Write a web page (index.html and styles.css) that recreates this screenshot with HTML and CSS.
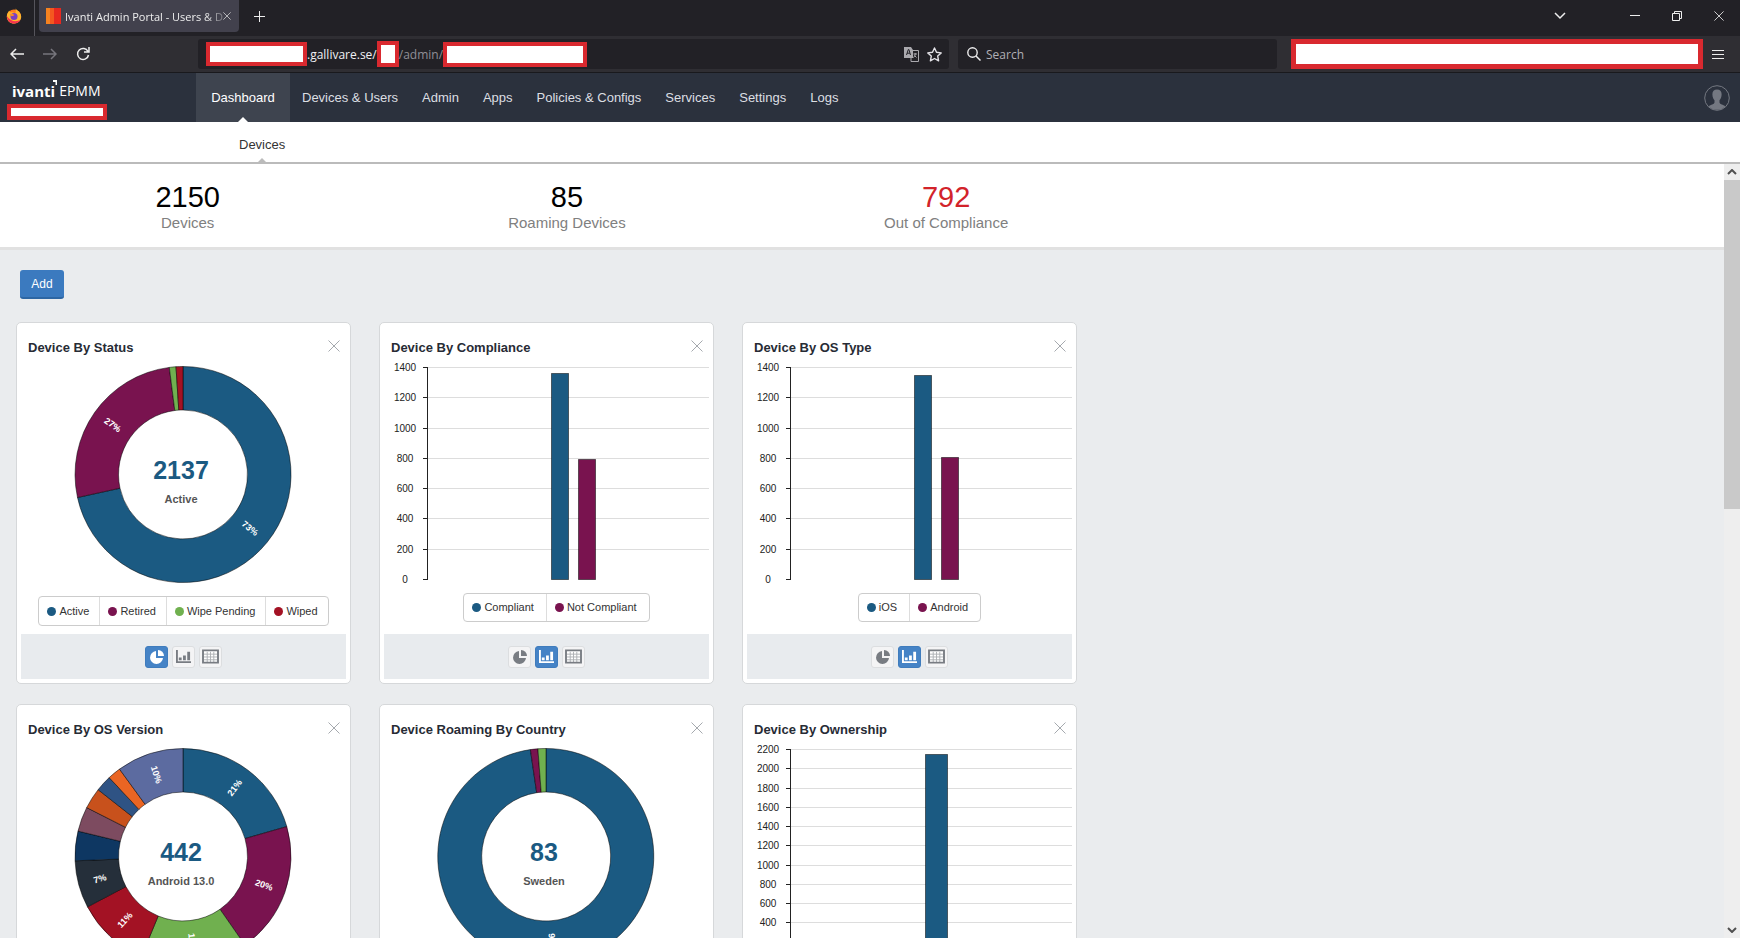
FILE: index.html
```html
<!DOCTYPE html>
<html lang="en">
<head>
    <meta charset="UTF-8">
    <meta name="viewport" content="width=device-width, initial-scale=1.0">
    <title>Ivanti Admin Portal - Users &amp; Devices</title>
    <link rel="stylesheet" href="styles.css">
</head>
<body>
    <svg class="defs" aria-hidden="true">
        <symbol id="icon-close" viewBox="0 0 12 12"><path d="M0.5 0.5 L11.5 11.5 M11.5 0.5 L0.5 11.5" fill="none" stroke="currentColor"/></symbol>
        <symbol id="icon-pie" viewBox="0 0 16 16"><path d="M7 2 A6.5 6.5 0 1 0 14 9 L7 9 Z" fill="currentColor"/><path d="M9 1 A6 6 0 0 1 15 7 L9 7 Z" fill="currentColor"/></symbol>
        <symbol id="icon-bars" viewBox="0 0 16 16"><path d="M0 1h2v12h14v2H0z M3 9h3v3H3z M7.500 7h3v5h-3z M12 3h3v9h-3z" fill="currentColor"/></symbol>
        <symbol id="icon-table" viewBox="0 0 18 16"><path d="M1 1.500h16v13H1z" fill="#fff" stroke="currentColor" stroke-width="2"/><path d="M5.500 3v11 M9 3v11 M12.500 3v11 M2 5.500h14 M2 8.500h14 M2 11.500h14" stroke="currentColor" opacity="0.6"/></symbol>
    </svg>

    <div class="titlebar">
        <div class="pinned">
            <svg width="16" height="16" viewBox="0 0 16 16">
                <circle cx="8" cy="8.500" r="7" fill="#ff7a1f"/>
                <path d="M9.500 0.500 C11 2.500 15 4 15.200 8.500 C15.300 12.500 12 15.500 8 15.500 C4 15.500 1 12.800 0.800 9 C0.700 6 2 4 3.500 2.500 L4 4.500 C6 4 8 4.500 9 5.500 C10 4 10 2.500 9.500 0.500 Z" fill="#ffb52e"/>
                <path d="M0.800 8 C1 13 4.500 15.500 8 15.500 C11 15.500 13.500 14 14.500 11.500 C12 13.500 8 13.800 5 12 C2.800 10.800 1.800 9.500 0.800 8 Z" fill="#f5334f"/>
                <circle cx="8" cy="8.500" r="3.500" fill="#7b3fc4"/>
                <path d="M3.500 6 C5.500 5.500 7 6 8.500 7 C7.500 8 6.500 8 5.500 8.200 Z" fill="#ff8a26"/>
            </svg>
        </div>
        <div class="tab">
            <svg width="15" height="16" viewBox="0 0 15 16"><path d="M0 0h5v16H0z" fill="#f58220"/><path d="M4 0h5v16H4z" fill="#f4581f"/><path d="M8 0h7v16H8z" fill="#e8281f"/></svg>
            <span class="tab-title">Ivanti Admin Portal - Users &amp; D</span>
            <button class="tab-close" aria-label="Close tab"><svg width="8" height="8"><use href="#icon-close"/></svg></button>
        </div>
        <button class="new-tab" aria-label="New tab"><svg width="11" height="11"><path d="M5.500 0v11M0 5.500h11" stroke="#eee"/></svg></button>
        <button class="win-btn tabs-list" aria-label="List tabs"><svg width="12" height="8"><path d="M1 1l5 5 5-5" fill="none" stroke="#eee" stroke-width="1.500"/></svg></button>
        <button class="win-btn" aria-label="Minimize"><svg width="10" height="10"><path d="M0 4.500h10" stroke="#eee"/></svg></button>
        <button class="win-btn" aria-label="Restore"><svg width="10" height="10"><path d="M0.500 2.500h7v7h-7z M2.500 2.500v-2h7v7h-2" fill="none" stroke="#eee"/></svg></button>
        <button class="win-btn" aria-label="Close"><svg width="10" height="10"><use href="#icon-close"/></svg></button>
    </div>

    <div class="toolbar">
        <button class="tool" aria-label="Back"><svg width="14" height="12"><path d="M14 6H1M6 1L1 6l5 5" fill="none" stroke="#eee" stroke-width="1.500"/></svg></button>
        <button class="tool" aria-label="Forward"><svg width="14" height="12"><path d="M0 6h13M8 1l5 5-5 5" fill="none" stroke="#77767d" stroke-width="1.500"/></svg></button>
        <button class="tool" aria-label="Reload"><svg width="14" height="14"><path d="M12 4.500A5.500 5.500 0 1 0 12.500 8M13 0v5H8" fill="none" stroke="#eee" stroke-width="1.500"/></svg></button>
        <div class="url">
            <span class="redacted host"></span><span class="domain">.gallivare.se/</span><span class="redacted part"></span><span class="path">/admin/</span><span class="redacted page"></span>
            <button class="url-btn" aria-label="Translate"><svg width="15" height="15" viewBox="0 0 15 15"><path d="M0 0h7l2 3v8H0z" fill="#aaa9ae"/><path d="M2.500 8L4.300 2.500h.6L6.500 8M3 6.200h3" fill="none" stroke="#232228"/><path d="M9 3.500h5.500v11H7V11" fill="none" stroke="#aaa9ae"/><path d="M9.500 7h3.500M11.200 6v1c0 2-1 3-2 3.500M10.500 8.500l2 2" fill="none" stroke="#aaa9ae"/></svg></button>
            <button class="url-btn" aria-label="Bookmark"><svg width="15" height="15" viewBox="0 0 15 15"><path d="M7.500 1l2 4.300 4.700.6-3.500 3.200.9 4.700-4.100-2.300-4.100 2.300.9-4.700L.8 5.900l4.700-.6z" fill="none" stroke="#e4e3e8" stroke-width="1.400" stroke-linejoin="round"/></svg></button>
        </div>
        <label class="search">
            <svg width="14" height="14"><circle cx="5.500" cy="5.500" r="4.700" fill="none" stroke="#eee" stroke-width="1.400"/><path d="M9 9l4.500 4.500" stroke="#eee" stroke-width="1.500"/></svg>
            <input type="text" placeholder="Search" aria-label="Search">
        </label>
        <span class="redacted extensions"></span>
        <button class="menu" aria-label="Menu"><svg width="12" height="10"><path d="M0 1.500h12M0 5.500h12M0 9.500h12" stroke="#eee"/></svg></button>
    </div>

    <header class="header">
        <div class="brand">
            <div class="logo"><b>ivanti</b><svg width="4" height="5"><path d="M0 0h4v5H2.500V2H0z" fill="#fff"/></svg><span>EPMM</span></div>
            <span class="redacted user"></span>
        </div>
        <nav class="nav">
            <a class="active" href="#">Dashboard</a>
            <a href="#">Devices &amp; Users</a>
            <a href="#">Admin</a>
            <a href="#">Apps</a>
            <a href="#">Policies &amp; Configs</a>
            <a href="#">Services</a>
            <a href="#">Settings</a>
            <a href="#">Logs</a>
        </nav>
        <button class="avatar" aria-label="Account"><svg width="26" height="26" viewBox="0 0 26 26"><circle cx="13" cy="13" r="12.300" fill="none" stroke="#747881"/><path d="M13 4.500c3.200 0 4.800 2.200 4.600 5.300-.1 2.400-1 4.200-2.100 5.400v2.300c.3 1.800 3.500 2.200 6 3.800A12 12 0 0 1 4.500 21.300c2.500-1.600 5.700-2 6-3.800v-2.300c-1.100-1.200-2-3-2.100-5.400C8.200 6.700 9.800 4.500 13 4.500z" fill="#747881"/></svg></button>
    </header>
    <nav class="subnav"><a href="#">Devices</a></nav>

    <div class="content">
        <main class="main">
            <section class="stats">
                <div class="stat"><strong>2150</strong><span>Devices</span></div>
                <div class="stat"><strong>85</strong><span>Roaming Devices</span></div>
                <div class="stat alert"><strong>792</strong><span>Out of Compliance</span></div>
            </section>
            <button class="add">Add</button>
            <div class="cards" id="cards"></div>
        </main>
        <div class="scrollbar">
            <svg class="arrow" width="10" height="6"><path d="M1 5l4-4 4 4" fill="none" stroke="#505050" stroke-width="2"/></svg>
            <div class="thumb"></div>
            <svg class="arrow" width="10" height="6"><path d="M1 1l4 4 4-4" fill="none" stroke="#505050" stroke-width="2"/></svg>
        </div>
    </div>
    <script src="script.js"></script>
</body>
</html>
```
FILE: styles.css
```css
* { box-sizing: border-box; }
body { margin: 0; height: 100vh; display: flex; flex-direction: column; overflow: hidden; font-family: "Liberation Sans", Arial, sans-serif; font-size: 13px; background: #eaecee; }
button { padding: 0; border: none; background: none; color: inherit; font: inherit; cursor: pointer; }
button, .tab, .toolbar, .url, .search { display: flex; align-items: center; }
button { justify-content: center; }
a { color: inherit; text-decoration: none; }
svg { display: block; flex: none; }
.defs { position: absolute; width: 0; height: 0; }
.redacted { flex: none; background: #fff; border: 4px solid #d9292f; }

/* browser */
.titlebar { flex: none; display: flex; height: 36px; background: #222126; color: #eee; font-family: "Open Sans", sans-serif; font-size: 11px; }
.pinned { width: 35px; padding: 8px 0 0 6px; border-right: 1px solid #55545b; }
.tab { width: 200px; height: 32px; margin-left: 4px; padding: 0 7px; background: #42414d; border-radius: 0 0 4px 4px; }
.tab-title { flex: 1; margin-left: 4px; white-space: nowrap; mask-image: linear-gradient(to right, #000 88%, transparent 105%); }
.tab-close { width: 14px; height: 20px; }
.new-tab { width: 40px; height: 32px; }
.win-btn { width: 42px; height: 31px; }
.tabs-list { margin: 0 33px 0 auto; }
.toolbar { flex: none; height: 37px; background: #2f2e33; border-bottom: 1px solid #19191d; color: #f0f0f4; font-family: "Open Sans", sans-serif; font-size: 12px; }
.tool { width: 33px; height: 33px; }
.url { flex: 1; height: 30px; margin: 0 9px 0 99px; padding: 0 5px 0 8px; background: #222126; border-radius: 3px; }
.host { width: 101px; height: 24px; }
.domain { flex: none; }
.part { width: 22px; height: 26px; }
.path { flex: none; color: #908f96; }
.page { width: 144px; height: 25px; margin-right: auto; }
.url-btn { width: 25px; height: 25px; }
.url-btn:last-child { width: 20px; }
.search { width: 319px; height: 30px; padding: 0 9px; gap: 5px; background: #222126; border-radius: 3px; }
.search input { flex: 1; min-width: 0; padding: 0; border: none; outline: none; background: none; color: #fff; font: inherit; }
.search input::placeholder { color: #b0afb5; opacity: 1; }
.extensions { width: 412px; height: 30px; margin-left: 14px; border-width: 5px; }
.menu { width: 37px; height: 30px; padding-right: 7px; }

/* portal header */
.header { flex: none; display: flex; height: 49px; background: #2b313d; color: #dcdfe3; }
.brand { width: 196px; padding: 7px 0 0 7px; color: #fff; font-family: "Open Sans", sans-serif; font-size: 15px; }
.logo { display: flex; height: 24px; padding-left: 5px; line-height: 22px; }
.logo svg { margin-left: -2px; }
.logo span { margin-left: 2px; font-size: 14px; }
.user { display: block; width: 100px; height: 16px; }
.nav { display: flex; line-height: 50px; }
.nav a { padding: 0 12px; }
.nav .active { position: relative; width: 94px; padding: 0; text-align: center; background: #3e444f; color: #fff; }
.nav .active::after, .subnav a::after { content: ""; position: absolute; bottom: 0; left: 50%; margin-left: -5px; border: 5px solid transparent; border-top: none; border-bottom-color: #fff; }
.avatar { margin-left: auto; padding-right: 10px; }
.subnav { flex: none; height: 42px; padding-left: 239px; background: #fff; border-bottom: 2px solid #bbb; color: #333; line-height: 45px; }
.subnav a { position: relative; display: inline-block; height: 40px; }
.subnav a::after { margin-left: -4px; border-width: 4px; border-top: none; border-bottom-color: #bbb; }

/* dashboard */
.content { flex: 1; display: flex; min-height: 0; }
.main { flex: 1; overflow: hidden; }
.stats { display: grid; grid-template-columns: repeat(3, 22%); height: 86px; padding-top: 15px; background: #fff; border-bottom: 3px solid #e1e1e1; text-align: center; }
.stat { padding-right: 4px; }
.stat strong { display: block; color: #000; font-size: 29px; font-weight: normal; line-height: 36px; }
.stat span { display: block; color: #808080; font-size: 15px; line-height: 16px; }
.alert strong { color: #d2232a; }
.add { width: 44px; height: 29px; margin: 20px 0 23px 20px; background: #3b7abf; border-bottom: 2px solid #2d66a3; border-radius: 3px; color: #fff; font-size: 12px; }
.cards { display: grid; grid-template-columns: repeat(3, minmax(0, 1fr)); gap: 20px 28px; max-width: 1061px; margin-left: 16px; }
.card { display: flex; flex-direction: column; padding: 4px; background: #fff; border: 1px solid #d6d8da; border-radius: 5px; }
.card-head { display: flex; justify-content: space-between; height: 34px; padding: 13px 6px 0 7px; }
.card h2 { margin: 0; color: #272b35; font-size: 13px; line-height: 15px; }
.remove { width: 12px; height: 12px; color: #a5a9ae; }
.chart { width: 100%; }
.chart text { text-anchor: middle; }
.slice, .column { stroke: #000; stroke-opacity: 0.5; }
.percent { fill: #fff; font-size: 9px; font-weight: bold; }
.total { fill: #1b5a82; font-size: 25px; font-weight: bold; }
.caption { fill: #555; font-size: 11px; font-weight: bold; }
.tick { fill: #222; font-size: 10px; }
.gridline { stroke: #ddd; }
.axis { fill: none; stroke: #222; }
.legend { display: flex; align-self: center; height: 29px; margin: 8px 0 12px 20px; padding: 0; border: 1px solid #ccc; border-radius: 4px; list-style: none; color: #333; font-size: 11px; line-height: 27px; white-space: nowrap; }
.legend li { display: flex; align-items: center; gap: 3px; padding: 0 12px 0 8px; }
.legend li + li { border-left: 1px solid #ddd; }
.pie .legend { height: 30px; margin: 11px 0 8px; line-height: 28px; }
.pie .legend li { padding-right: 10px; }
.dot { width: 9px; height: 9px; border-radius: 50%; }
.card-foot { display: flex; justify-content: center; align-items: center; gap: 4px; height: 45px; margin-top: auto; background: #e8ebee; }
.view { width: 23px; height: 22px; background: #f4f4f5; border: 1px solid #dcdee0; border-radius: 3px; color: #787c82; }
.view.on { background: #4583c6; border-color: #3f7cbd; color: #fff; }
.scrollbar { display: flex; flex-direction: column; align-items: center; width: 16px; background: #eeeeee; }
.arrow { margin: 5px 0; }
.thumb { width: 16px; height: 42.5%; margin-bottom: auto; background: #c9c9c9; }
```
FILE: script.js
```js
const BLUE = '#1b5a82', PURPLE = '#79134f', GREEN = '#70b04f', RED = '#a31224';

// pie slices: [name, end angle, colour, label]
const cards = [
    { title: 'Device By Status', type: 'pie', total: '2137', caption: 'Active', legend: 4, data: [
        ['Active', 257.7, BLUE, '73%'], ['Retired', 352.7, PURPLE, '27%'], ['Wipe Pending', 356.3, GREEN], ['Wiped', 360, RED]] },
    { title: 'Device By Compliance', type: 'bar', max: 1400, size: 18, left: 167, legend: 2, data: [
        ['Compliant', 1360, BLUE], ['Not Compliant', 790, PURPLE]] },
    { title: 'Device By OS Type', type: 'bar', max: 1400, size: 18, left: 167, legend: 2, data: [
        ['iOS', 1346, BLUE], ['Android', 803, PURPLE]] },
    { title: 'Device By OS Version', type: 'pie', total: '442', caption: 'Android 13.0', legend: 0, data: [
        ['Android 13.0', 73.9, BLUE, '21%'], ['', 145, PURPLE, '20%'], ['', 202.6, GREEN, '16%'], ['', 242.2, RED, '11%'],
        ['', 267.7, '#252f3a', '7%'], ['', 283.6, '#0e3762'], ['', 296.9, '#7d4b60'], ['', 308.2, '#c8511c'],
        ['', 316.9, '#2f5384'], ['', 324, '#ea6523'], ['', 360, '#5c6ba0', '10%']] },
    { title: 'Device Roaming By Country', type: 'pie', total: '83', caption: 'Sweden', legend: 0, data: [
        ['Sweden', 351.7, BLUE, '98%'], ['', 355.7, PURPLE], ['', 360, GREEN]] },
    { title: 'Device By Ownership', type: 'bar', max: 2200, size: 23, left: 178, legend: 0, data: [
        ['', 2150, BLUE]] }
];

const CX = 162, CY = 113.5;

function point(radius, angle) {
    const a = (angle - 90) * Math.PI / 180;
    return (CX + radius * Math.cos(a)).toFixed(1) + ' ' + (CY + radius * Math.sin(a)).toFixed(1);
}

function pie(card) {
    let start = 0, slices = '', labels = '';
    card.data.forEach(([name, end, color, label]) => {
        const big = end - start > 180 ? 1 : 0;
        slices += `<path class="slice" fill="${color}" d="M${point(108, start)} A108 108 0 ${big} 1 ${point(108, end)} L${point(64.5, end)} A64.5 64.5 0 ${big} 0 ${point(64.5, start)} Z"/>`;
        if (label) {
            const mid = (start + end) / 2;
            const turn = mid > 180 ? mid - 270 : mid - 90;
            labels += `<g transform="translate(${point(86, mid)}) rotate(${turn})"><text class="percent" y="3">${label}</text></g>`;
        }
        start = end;
    });
    return slices + labels + `<text class="total" x="160" y="118">${card.total}</text><text class="caption" x="160" y="142">${card.caption}</text>`;
}

function bar(card) {
    const scale = v => Math.round(218 - v / card.max * 212) + 0.5;
    let out = '';
    for (let v = 0; v <= card.max; v += 200) {
        const y = scale(v);
        if (v) out += `<path class="gridline" d="M44 ${y}H325"/>`;
        out += `<path class="axis" d="M39 ${y}h5"/><text class="tick" x="21" y="${y + 3}">${v}</text>`;
    }
    out += `<path class="axis" d="M43.5 6V219"/>`;
    card.data.forEach(([name, value, color], i) => {
        const y = scale(value);
        out += `<rect class="column" fill="${color}" x="${card.left + i * 27 + 0.5}" y="${y}" width="${card.size - 1}" height="${218.5 - y}"/>`;
    });
    return out;
}

document.getElementById('cards').innerHTML = cards.map(card => `
    <article class="card ${card.type}">
        <div class="card-head">
            <h2>${card.title}</h2>
            <button class="remove" aria-label="Remove"><svg width="12" height="12"><use href="#icon-close"/></svg></button>
        </div>
        <svg class="chart" viewBox="0 0 325 224">${card.type === 'pie' ? pie(card) : bar(card)}</svg>
        ${card.legend ? `<ul class="legend">${card.data.slice(0, card.legend).map(d => `<li><span class="dot" style="background: ${d[2]}"></span>${d[0]}</li>`).join('')}</ul>` : ''}
        <div class="card-foot">
            <button class="view ${card.type === 'pie' ? 'on' : ''}" aria-label="Pie"><svg width="16" height="16"><use href="#icon-pie"/></svg></button>
            <button class="view ${card.type === 'bar' ? 'on' : ''}" aria-label="Bars"><svg width="15" height="15"><use href="#icon-bars"/></svg></button>
            <button class="view" aria-label="Table"><svg width="17" height="15"><use href="#icon-table"/></svg></button>
        </div>
    </article>`).join('');
```
